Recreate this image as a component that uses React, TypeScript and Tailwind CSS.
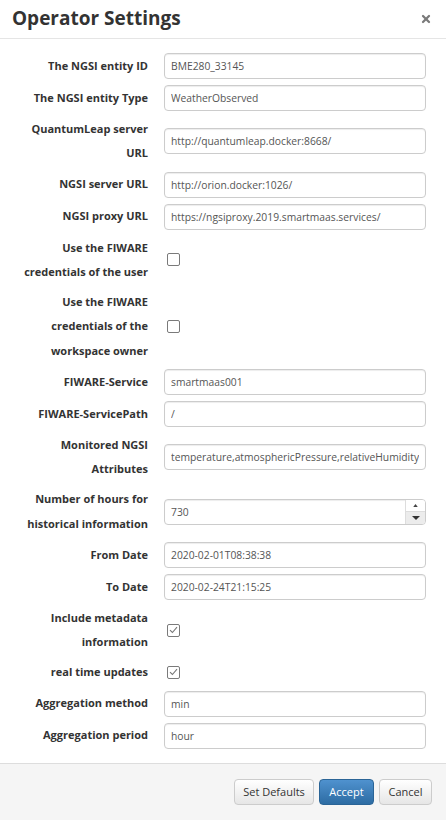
import { X } from "lucide-react";

type Field =
  | { kind: "text"; label: string; value: string }
  | { kind: "number"; label: string; value: string }
  | { kind: "check"; label: string; checked: boolean };

const fields: Field[] = [
  { kind: "text", label: "The NGSI entity ID", value: "BME280_33145" },
  { kind: "text", label: "The NGSI entity Type", value: "WeatherObserved" },
  { kind: "text", label: "QuantumLeap server URL", value: "http://quantumleap.docker:8668/" },
  { kind: "text", label: "NGSI server URL", value: "http://orion.docker:1026/" },
  { kind: "text", label: "NGSI proxy URL", value: "https://ngsiproxy.2019.smartmaas.services/" },
  { kind: "check", label: "Use the FIWARE credentials of the user", checked: false },
  { kind: "check", label: "Use the FIWARE credentials of the workspace owner", checked: false },
  { kind: "text", label: "FIWARE-Service", value: "smartmaas001" },
  { kind: "text", label: "FIWARE-ServicePath", value: "/" },
  { kind: "text", label: "Monitored NGSI Attributes", value: "temperature,atmosphericPressure,relativeHumidity" },
  { kind: "number", label: "Number of hours for historical information", value: "730" },
  { kind: "text", label: "From Date", value: "2020-02-01T08:38:38" },
  { kind: "text", label: "To Date", value: "2020-02-24T21:15:25" },
  { kind: "check", label: "Include metadata information", checked: true },
  { kind: "check", label: "real time updates", checked: true },
  { kind: "text", label: "Aggregation method", value: "min" },
  { kind: "text", label: "Aggregation period", value: "hour" },
];

const boxClass =
  "block h-[26px] w-full rounded-[4px] border border-[#ccc] bg-white text-[10.3px] text-[#555] shadow-[inset_0_1px_1px_rgba(0,0,0,0.075)]";

function Control({ field }: { field: Field }) {
  if (field.kind === "check") {
    return (
      <div className="flex h-[24px] items-center pl-[3px]">
        <span className="flex h-[13px] w-[13px] items-center justify-center rounded-[2px] border border-[#7a7a7a] bg-white">
          {field.checked && (
            <svg width="9" height="8" viewBox="0 0 9 8" fill="none">
              <path d="M1 4.2 L3.4 6.5 L8 1.2" stroke="#777" strokeWidth="1.1" />
            </svg>
          )}
        </span>
      </div>
    );
  }

  if (field.kind === "number") {
    return (
      <div className={`${boxClass} flex overflow-hidden`}>
        <span className="flex-1 px-[6px] leading-[24px]">{field.value}</span>
        <div className="flex w-[20px] flex-col border-l border-[#ddd]">
          <div className="flex flex-1 items-center justify-center border-b border-[#ddd] bg-white">
            <svg width="5" height="3" viewBox="0 0 6 4">
              <path d="M3 0 L6 4 L0 4 Z" fill="#444" />
            </svg>
          </div>
          <div className="flex flex-1 items-center justify-center bg-[#ececec]">
            <svg width="8" height="4" viewBox="0 0 8 4">
              <path d="M0 0 L8 0 L4 4 Z" fill="#333" />
            </svg>
          </div>
        </div>
      </div>
    );
  }

  return (
    <input
      type="text"
      readOnly
      value={field.value}
      className={`${boxClass} px-[6px] outline-none`}
    />
  );
}

export default function App() {
  return (
    <div className="flex min-h-screen flex-col bg-white font-['Open_Sans',sans-serif] text-[#333]">
      <header className="flex items-start justify-between border-b border-[#e5e5e5] pt-[4px] pb-[6px] pl-[12px] pr-[14px]">
        <h1 className="text-[19px] font-bold leading-[28px] text-[#333]">Operator Settings</h1>
        <X className="mt-[9px] h-[12px] w-[12px] text-[#7a7a7a]" strokeWidth={4.5} aria-hidden="true" />
      </header>

      <main className="flex flex-1 flex-col gap-[6px] pt-[14px] pr-[20px] pb-[12px] pl-[20px]">
        {fields.map((field) => (
          <div key={field.label} className="flex items-center">
            <label className="w-[128px] shrink-0 text-right text-[11px] font-bold leading-[24.25px] text-[#333]">
              {field.label}
            </label>
            <div className="ml-[16px] flex-1">
              <Control field={field} />
            </div>
          </div>
        ))}
      </main>

      <footer className="flex h-[57px] items-start justify-end gap-[5px] border-t border-[#ddd] bg-[#f5f5f5] pt-[15px] pr-[14px]">
        <button className="h-[26px] w-[80px] rounded-[4px] border border-[#ccc] bg-linear-to-b from-white to-[#e6e6e6] text-[11px] text-[#333]">
          Set Defaults
        </button>
        <button className="h-[26px] w-[55px] rounded-[4px] border border-[#2a6496] bg-linear-to-b from-[#4f92cf] to-[#2d6ca3] text-[11px] text-white">
          Accept
        </button>
        <button className="h-[26px] w-[53px] rounded-[4px] border border-[#ccc] bg-linear-to-b from-white to-[#e6e6e6] text-[11px] text-[#333]">
          Cancel
        </button>
      </footer>
    </div>
  );
}
